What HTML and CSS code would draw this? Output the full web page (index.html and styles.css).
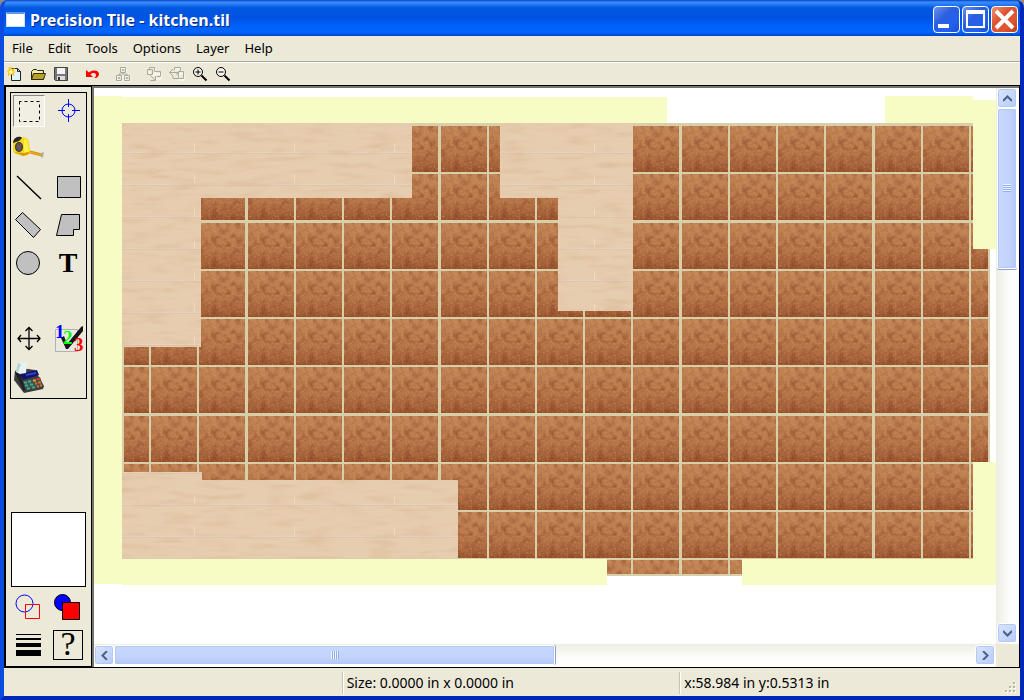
FILE: index.html
```
<!DOCTYPE html>
<html lang="en">
<head>
    <meta charset="utf-8">
    <title>Precision Tile - kitchen.til</title>
    <link rel="stylesheet" href="styles.css">
</head>
<body>
<div class="window">
    <header class="titlebar">
        <span class="app-icon"></span>
        <h1>Precision Tile - kitchen.til</h1>
        <div class="window-buttons">
            <button type="button" aria-label="Minimize"><svg width="25" height="25"><path d="M4 17h11v4H4z" fill="#fff"/></svg></button>
            <button type="button" aria-label="Maximize"><svg width="25" height="25"><path d="M3 3h19v18H3zM5 7v12h15V7z" fill="#fff" fill-rule="evenodd"/></svg></button>
            <button type="button" class="close" aria-label="Close"><svg width="25" height="25"><path d="M4 4L21 21M21 4L4 21" stroke="#fff" stroke-width="4"/></svg></button>
        </div>
    </header>

    <nav class="menu">
        <button type="button">File</button>
        <button type="button">Edit</button>
        <button type="button">Tools</button>
        <button type="button">Options</button>
        <button type="button">Layer</button>
        <button type="button">Help</button>
    </nav>

    <div class="toolbar">
        <button type="button" aria-label="New">
            <svg width="16" height="16"><path d="M4.500 2.500h6l3 3v9h-9z" fill="#e3f3fa" stroke="#222"/><path d="M10.500 2.500v3h3" fill="none" stroke="#222"/><path d="M4 0l1 3 3-1-1 3 2 1-2 1v3L4 8 1 10V7L0 5l2-1-1-3 2 1z" fill="#f8c61b"/><path d="M4 3l1 2 2 1-2 1-1 2-1-2-2-1 2-1z" fill="#fff8a0"/></svg>
        </button>
        <button type="button" aria-label="Open">
            <svg width="16" height="16"><path d="M1.500 13.500v-8l2-2h3l1 1h6v9z" fill="#f2e47c" stroke="#222"/><path d="M3 6h9" stroke="#fffbd0"/><path d="M1.500 13.500l2-6h12l-2 6z" fill="#b5a12e" stroke="#332c08"/></svg>
        </button>
        <button type="button" aria-label="Save">
            <svg width="16" height="16"><path d="M1.500 1.500h13v13h-12l-1-1z" fill="#777" stroke="#444"/><path d="M4 2h8v6H4z" fill="#f4f4f4"/><path d="M4 10h8v4H4z" fill="#ddd"/><path d="M5 11h2v3H5z" fill="#333"/></svg>
        </button>
        <button type="button" class="apart" aria-label="Undo">
            <svg width="16" height="16"><path d="M2 4v7h7L6.500 8.500C9 6 12 7 12 9c0 1.500-1 2.500-2 3h2c2-1 3-2.500 3-4.500C14.500 4.500 9 3 5 6.500z" fill="#f00"/></svg>
        </button>
        <button type="button" class="apart" aria-label="Group" disabled>
            <svg width="16" height="16"><path d="M6 3h5v5H6zM3 10h5v5H3zM10 10h5v5h-5z" fill="none" stroke="#fff"/><path d="M5.500 1.500h5v5h-5zM1.500 9.500h5v5h-5zM9.500 9.500h5v5h-5zM8 6v2M4 9V8h8v1M7 5l1-2 1 2M3 13l1-2 1 2M11 13l1-2 1 2" fill="none" stroke="#aca899"/></svg>
        </button>
        <button type="button" class="apart" aria-label="Bring to front" disabled>
            <svg width="16" height="16"><path d="M3 3h6v6H3zM10 8h5v5h-5z" fill="none" stroke="#fff"/><path d="M3.500 4.500v-3h5v4M1.500 3.500h5v5h-5zM8.500 5.500h6v5h-4M4 9l5 5M9.500 10v4.500h-5" fill="none" stroke="#aca899"/></svg>
        </button>
        <button type="button" aria-label="Send to back" disabled>
            <svg width="16" height="16"><path d="M6 3h6v5M10 8h5v6h-5z" fill="none" stroke="#fff"/><path d="M5.500 4.500v-3h6v4M9.500 5.500h5v7h-5zM9 8H7M4 3L.500 6.500 4 10M1 6.500h8M4 10v2.500h5" fill="none" stroke="#aca899"/></svg>
        </button>
        <button type="button" aria-label="Zoom in">
            <svg width="16" height="16"><circle cx="6" cy="6" r="4.500" fill="#f5f3ea" stroke="#000"/><path d="M3.500 6h5M6 3.500v5" stroke="#000"/><path d="M9.500 9.500l5 5" stroke="#000" stroke-width="2"/></svg>
        </button>
        <button type="button" aria-label="Zoom out">
            <svg width="16" height="16"><circle cx="6" cy="6" r="4.500" fill="#f5f3ea" stroke="#000"/><path d="M3.500 6h5" stroke="#000"/><path d="M9.500 9.500l5 5" stroke="#000" stroke-width="2"/></svg>
        </button>
    </div>

    <main class="workspace">
        <aside class="panel">
            <div class="tools boxed">
                <button type="button" class="selected" aria-label="Select">
                    <svg width="32" height="32"><rect x="5.500" y="5.500" width="20" height="20" fill="none" stroke="#000" stroke-dasharray="3 3" stroke-dashoffset="1"/></svg>
                </button>
                <button type="button" aria-label="Origin">
                    <svg width="32" height="32"><path d="M6 15.500h7M20 15.500h8M16.500 4v8M16.500 19v8" stroke="#00f"/><circle cx="16.500" cy="15.500" r="6.500" fill="none" stroke="#00f"/></svg>
                </button>
                <button type="button" aria-label="Measure">
                    <svg width="32" height="32">
                        <path d="M13 17l16 4v2l-16-4z" fill="#f9b51b" stroke="#d98c08" stroke-width="1"/>
                        <path d="M28 20l3-1-1 5-2 1z" fill="#aaa"/>
                        <path d="M0 9C1 5 4 3 8 4l5 1c2 1 3 3 3 6l1 7c0 3-3 5-6 5l-8-2-3-3z" fill="#f8d711"/>
                        <path d="M0 9C1 5 4 3 8 4l1 1-3 3-6 2z" fill="#26262a"/>
                        <path d="M11 6l3 1 2 11-5 5z" fill="#fff047"/>
                        <path d="M1 19l9 4 6-2v-2l-6 1z" fill="#d89b08"/>
                        <ellipse cx="6" cy="14" rx="4" ry="5" fill="#2c3038"/>
                        <ellipse cx="6" cy="14" rx="3" ry="4" fill="#5f555a"/>
                        <path d="M5 12h2v3H5z" fill="#83504a"/>
                    </svg>
                </button>
                <span></span>
                <button type="button" aria-label="Line">
                    <svg width="32" height="32"><path d="M4 5l24 23" stroke="#000" stroke-width="1.500"/></svg>
                </button>
                <button type="button" aria-label="Rectangle">
                    <svg width="32" height="32"><path d="M5.500 5.500h23v21h-23z" fill="#c0c0c0" stroke="#000"/></svg>
                </button>
                <button type="button" aria-label="Rotated rectangle">
                    <svg width="32" height="32"><path d="M9.500 3.500l18 17-7 8-18-18z" fill="#c0c0c0" stroke="#000"/></svg>
                </button>
                <button type="button" aria-label="Polygon">
                    <svg width="32" height="32"><path d="M9.500 5.500h18v15h-6v6h-17z" fill="#c0c0c0" stroke="#000"/></svg>
                </button>
                <button type="button" aria-label="Ellipse">
                    <svg width="32" height="32"><circle cx="15" cy="16" r="11.500" fill="#c0c0c0" stroke="#000"/></svg>
                </button>
                <button type="button" class="text-tool">T</button>
                <span></span>
                <span></span>
                <button type="button" aria-label="Move">
                    <svg width="32" height="32"><path d="M5 15.500h22M16 4.500v22M8 12l-3 3.500L8 19M24 12l3 3.500-3 3.500M12.500 8L16 4.500 19.500 8M12.500 23l3.500 3.500 3.500-3.500" fill="none" stroke="#000" stroke-width="1.300"/></svg>
                </button>
                <button type="button" aria-label="Count">
                    <svg class="count" width="32" height="32">
                        <path d="M3.500 6.500h22v22h-22z" fill="#ebe8e0" stroke="#b0b0b8"/>
                        <path d="M9 15l3-2 3 8L29 4l2-1v5L16 26h-2z" fill="#161616"/>
                        <text class="digit" x="3" y="15" fill="#00f">1</text>
                        <text class="digit" x="11" y="21" fill="#0f0">2</text>
                        <text class="digit" x="22" y="28" fill="#f00">3</text>
                    </svg>
                </button>
                <button type="button" aria-label="Estimate">
                    <svg width="32" height="32">
                        <path d="M2 10l6-3 14 2 4 7 5 9-1 3-19 4L1 19z" fill="#3b3b40"/>
                        <path d="M2 11l9 20 1-3-5-15z" fill="#222"/>
                        <path d="M7 13l17-4 2 5-16 5z" fill="#10156b"/>
                        <path d="M13 14l10-2" stroke="#3040c8" stroke-width="2"/>
                        <path d="M3 11l2-10 4 1 5-1-1 11-6 1z" fill="#e8f2f2"/>
                        <path d="M5 2l-2 8 2 1 3-8z" fill="#b9cfd0"/>
                        <path d="M10 20l17-4 3 9-17 4z" fill="#4d4d50"/>
                        <path d="M11 21.500h3M15 20.500h3M12 24.500h3M17 23.500h3M14 27.500h3M19 26.500h3" stroke="#25b98a" stroke-width="2"/>
                        <path d="M20 19.500h3" stroke="#e8a020" stroke-width="2"/>
                        <path d="M24 18h3" stroke="#f03020" stroke-width="2"/>
                        <path d="M22 22.500h2M25 21.500h3M24 25.500h2M27 24.500h2" stroke="#dc7818" stroke-width="2"/>
                    </svg>
                </button>
                <span></span>
            </div>

            <div class="panel-foot">
                <div class="preview boxed"></div>
                <div class="tools">
                    <button type="button" aria-label="Line colour">
                        <svg width="32" height="32"><circle cx="11.500" cy="12.500" r="8.500" fill="none" stroke="#00f"/><path d="M12.500 13.500h14v14h-14z" fill="none" stroke="#f00"/></svg>
                    </button>
                    <button type="button" aria-label="Fill colour">
                        <svg width="32" height="32"><circle cx="10.500" cy="11.500" r="8" fill="#00f" stroke="#000"/><path d="M10.500 11.500h17v17h-17z" fill="#f00" stroke="#000"/></svg>
                    </button>
                    <button type="button" aria-label="Line width">
                        <svg width="32" height="32"><path d="M3 5h25v1H3zM3 9h25v2H3zM3 14h25v4H3zM3 21h25v6H3z"/></svg>
                    </button>
                    <button type="button" class="help-tool">?</button>
                </div>
            </div>
        </aside>

        <section class="canvas">
            <svg class="drawing" aria-label="Kitchen floor plan">
                <defs>
                    <linearGradient id="clay" x1="0" y1="0" x2="0" y2="1">
                        <stop offset="0" stop-color="#c18657"/>
                        <stop offset=".5" stop-color="#b9784a"/>
                        <stop offset=".85" stop-color="#a5623a"/>
                        <stop offset="1" stop-color="#965029"/>
                    </linearGradient>
                    <filter id="grit" x="0" y="0" width="1" height="1" color-interpolation-filters="sRGB">
                        <feTurbulence type="fractalNoise" baseFrequency=".5" numOctaves="2" seed="8"/>
                        <feColorMatrix values="0 0 0 0 .85  0 0 0 0 .6  0 0 0 0 .4  1.200 0 0 0 -.52" result="light"/>
                        <feTurbulence type="fractalNoise" baseFrequency=".16" numOctaves="4" seed="21"/>
                        <feColorMatrix values="0 0 0 0 .5  0 0 0 0 .22  0 0 0 0 .13  1.200 0 0 0 -.52" result="dark"/>
                        <feMerge>
                            <feMergeNode in="SourceGraphic"/>
                            <feMergeNode in="light"/>
                            <feMergeNode in="dark"/>
                        </feMerge>
                    </filter>
                    <filter id="grain" x="0" y="0" width="1" height="1" color-interpolation-filters="sRGB">
                        <feTurbulence type="fractalNoise" baseFrequency=".03 .16" numOctaves="2" seed="4"/>
                        <feColorMatrix values="0 0 0 0 .8  0 0 0 0 .66  0 0 0 0 .5  .8 0 0 0 -.36" result="veins"/>
                        <feMerge><feMergeNode in="SourceGraphic"/><feMergeNode in="veins"/></feMerge>
                        <feComposite in2="SourceGraphic" operator="in"/>
                    </filter>
                    <pattern id="planks" x="94" y="121" width="100" height="32" patternUnits="userSpaceOnUse">
                        <path d="M0 0h100v32H0z" fill="#e7cdb0"/>
                        <path d="M0 31h100v1H0z" fill="#e6d2bf"/>
                        <path d="M0 0h100v1H0z" fill="#dfc5a8"/>
                        <path d="M0 22h1v9H0z" fill="#f0dcc5"/>
                    </pattern>
                    <rect id="tile" width="46" height="46" fill="url(#clay)" filter="url(#grit)"/>
                    <g id="row">
                        <use href="#tile" x="103"/><use href="#tile" x="151"/><use href="#tile" x="199"/>
                        <use href="#tile" x="248"/><use href="#tile" x="296"/><use href="#tile" x="344"/>
                        <use href="#tile" x="392"/><use href="#tile" x="441"/><use href="#tile" x="489"/>
                        <use href="#tile" x="537"/><use href="#tile" x="585"/><use href="#tile" x="633"/>
                        <use href="#tile" x="682"/><use href="#tile" x="730"/><use href="#tile" x="778"/>
                        <use href="#tile" x="826"/><use href="#tile" x="875"/><use href="#tile" x="923"/>
                        <use href="#tile" x="971"/>
                    </g>
                    <clipPath id="floor">
                        <path d="M124 126H973V249H988V462H973V558H742V574H607V558H124z"/>
                    </clipPath>
                </defs>
                <g transform="translate(-94 -88)">
                    <!-- walls -->
                    <path fill="#f7fcc5" d="M94 96h28v1h545v26H122v436h485v26H122v-1H94zM885 96h88v4h23v149h-23V123h-88zM973 462h23v123H742v-26h231z"/>
                    <!-- grout -->
                    <path fill="#d8cfa9" d="M122 123H973V249H990V462H973V559H742V576H607V559H122z"/>
                    <!-- tiles -->
                    <g clip-path="url(#floor)">
                        <use href="#row" y="126"/><use href="#row" y="174"/><use href="#row" y="223"/>
                        <use href="#row" y="271"/><use href="#row" y="319"/><use href="#row" y="367"/>
                        <use href="#row" y="416"/><use href="#row" y="464"/><use href="#row" y="512"/>
                        <use href="#row" y="560"/>
                    </g>
                    <!-- cabinets -->
                    <path fill="url(#planks)" filter="url(#grain)" d="M122 123H412V198H201V347H122zM500 123H633V311H558V198H500zM122 472H202V480H458V558H122z"/>
                </g>
            </svg>
            <div class="scroll vertical">
                <button type="button" aria-label="Scroll up"><svg width="9" height="7"><path d="M0 6l4.500-4.500L9 6" fill="none" stroke="#4d6185" stroke-width="2"/></svg></button>
                <span class="thumb"><i></i></span>
                <button type="button" class="last" aria-label="Scroll down"><svg width="9" height="7"><path d="M0 1l4.500 4.500L9 1" fill="none" stroke="#4d6185" stroke-width="2"/></svg></button>
            </div>
            <div class="scroll horizontal">
                <button type="button" aria-label="Scroll left"><svg width="7" height="9"><path d="M6 0L1.500 4.500 6 9" fill="none" stroke="#4d6185" stroke-width="2"/></svg></button>
                <span class="thumb"><i></i></span>
                <button type="button" class="last" aria-label="Scroll right"><svg width="7" height="9"><path d="M1 0l4.500 4.500L1 9" fill="none" stroke="#4d6185" stroke-width="2"/></svg></button>
            </div>
        </section>
    </main>

    <footer class="status">
        <div></div>
        <div>Size: 0.0000 in x 0.0000 in</div>
        <div>
            x:58.984 in y:0.5313 in
            <svg class="grip" width="12" height="12"><path d="M9 1h2v2H9zM5 5h2v2H5zM9 5h2v2H9zM1 9h2v2H1zM5 9h2v2H5zM9 9h2v2H9z" fill="#fff"/><path d="M8 0h2v2H8zM4 4h2v2H4zM8 4h2v2H8zM0 8h2v2H0zM4 8h2v2H4zM8 8h2v2H8z" fill="#b8b4a2"/></svg>
        </div>
    </footer>
</div>
</body>
</html>
```
FILE: styles.css
```
:root {
    --face: #ece9d8;
    --blue: #0046e0;
    --shadow: #aca899;
}

* {
    box-sizing: border-box;
}

body {
    margin: 0;
    background: #8d8d85;
    font-family: "Noto Sans", "DejaVu Sans", sans-serif;
    font-size: 14px;
    color: #000;
}

button {
    margin: 0;
    padding: 0;
    border: none;
    background: none;
    font: inherit;
    color: inherit;
}

svg {
    display: block;
}

.window {
    display: flex;
    flex-direction: column;
    height: 100vh;
    border: 4px solid var(--blue);
    border-top: none;
    border-left-color: #0a4be0;
    border-right-color: #0028b8;
    border-bottom-color: #0028b8;
    border-radius: 8px 8px 0 0;
    background: var(--blue);
    overflow: hidden;
}

/* title bar */
.titlebar {
    display: flex;
    align-items: center;
    height: 36px;
    flex: none;
    margin: 0 -4px;
    padding: 3px 6px 0;
    background: linear-gradient(#0840c8 0, #3a8cf8 2px, #2a80f5 4px, #0058e0 8px, #0053e1 18px, #0060fa 26px, #0066ff 32px, #0045c8 36px);
}

.titlebar h1 {
    flex: 1;
    margin: 0;
    padding-left: 5px;
    font-size: 16px;
    font-weight: bold;
    line-height: 20px;
    color: #fff;
    text-shadow: 1px 1px 0 #0a2a80;
}

.app-icon {
    width: 19px;
    height: 15px;
    border: 1px solid #cfe0f8;
    border-top: 2px solid #5c95ec;
    background: #fff;
}

.window-buttons {
    display: flex;
    gap: 2px;
}

.window-buttons button {
    width: 27px;
    height: 27px;
    border: 1px solid #fff;
    border-radius: 4px;
    background: linear-gradient(135deg, #6c93f0, #2b5ee0 40%, #2461ee 70%, #1a50d0);
}

.window-buttons .close {
    background: linear-gradient(135deg, #f0906c, #dc5230 40%, #e0562f 70%, #b83a18);
}

/* menu */
.menu {
    display: flex;
    gap: 1px;
    height: 27px;
    flex: none;
    padding-left: 1px;
    background: var(--face);
    border-bottom: 1px solid #fff;
    box-shadow: inset 0 -1px var(--shadow);
    font-size: 13px;
}

.menu button {
    padding: 0 7px 2px;
}

.toolbar {
    display: flex;
    height: 22px;
    flex: none;
    background: var(--face);
}

.toolbar button {
    display: flex;
    align-items: center;
    justify-content: center;
    width: 23px;
    padding-right: 1px;
}

.toolbar .apart {
    margin-left: 8px;
}

/* tool panel */
.workspace {
    display: flex;
    flex: 1;
    min-height: 0;
    border: 1px solid #000;
    background: var(--face);
}

.panel {
    display: flex;
    flex-direction: column;
    justify-content: space-between;
    width: 87px;
    flex: none;
    padding: 5px 4px;
    border: 1px solid #000;
}

.boxed {
    border: 1px solid #000;
}

.tools {
    display: grid;
    grid-template-columns: 32px 32px;
    grid-auto-rows: 32px;
    gap: 6px 7px;
    padding: 2px;
}

.tools.boxed {
    padding-bottom: 5px;
}

.tools .selected {
    border: 1px solid #8a8880;
    border-right-color: #fff;
    border-bottom-color: #fff;
    background: #f1efe4;
}

.text-tool {
    font-family: "Liberation Serif", serif;
    font-size: 28px;
    font-weight: bold;
    line-height: 32px;
}

.count {
    overflow: visible;
}

.digit {
    font-family: "Liberation Serif", serif;
    font-size: 19px;
    font-weight: bold;
}

.help-tool {
    margin: 1px;
    border: 1px solid #000;
    font-family: "Liberation Serif", serif;
    font-size: 34px;
    line-height: 26px;
    padding-bottom: 2px;
}

.preview {
    width: 75px;
    height: 75px;
    margin-left: 1px;
    background: #fff;
}

.panel-foot .tools {
    padding: 4px 3px 0;
}

/* canvas */
.canvas {
    display: grid;
    grid-template-columns: 1fr 23px;
    grid-template-rows: 1fr 23px;
    flex: 1;
    min-width: 0;
    border: 2px solid #77756a;
    border-right: none;
    border-bottom: none;
}

.drawing {
    width: 100%;
    height: 100%;
    background: #fff;
}

.scroll {
    display: flex;
}

.vertical {
    flex-direction: column;
    padding: 0 2px 1px 1px;
    background: linear-gradient(to right, #eeede5, #fdfdfa 60%, #fff);
}

.horizontal {
    padding: 1px 1px 2px 0;
    background: linear-gradient(#eeede5, #fdfdfa 60%, #fff);
}

.scroll button {
    display: flex;
    align-items: center;
    justify-content: center;
    width: 20px;
    height: 20px;
    flex: none;
    border: 1px solid #fff;
    border-radius: 3px;
    background: linear-gradient(135deg, #dbe5ff, #b6cbf8);
    box-shadow: inset 0 0 0 1px #b4c8f6;
}

.scroll .last {
    margin-top: auto;
}

.horizontal .last {
    margin: 0 0 0 auto;
}

.thumb {
    display: flex;
    align-items: center;
    justify-content: center;
    border: 1px solid #fff;
    border-radius: 2px;
    background: linear-gradient(to right, #c9d8fc, #c2d3fd 60%, #b4c9f6);
    box-shadow: 0 1px #86a3d4, inset 0 0 0 1px #b4c8f6;
}

.vertical .thumb {
    height: 29%;
}

.horizontal .thumb {
    width: 49%;
    background: linear-gradient(#c9d8fc, #c2d3fd 60%, #b4c9f6);
    box-shadow: 1px 0 #86a3d4, inset 0 0 0 1px #b4c8f6;
}

.thumb i {
    width: 8px;
    height: 8px;
    background: repeating-linear-gradient(#eef4fe 0 1px, #8cb0f8 1px 2px);
}

.horizontal .thumb i {
    background: repeating-linear-gradient(to right, #eef4fe 0 1px, #8cb0f8 1px 2px);
}

/* status bar */
.status {
    display: grid;
    grid-template-columns: repeat(3, 1fr);
    align-items: end;
    height: 28px;
    flex: none;
    padding: 0 3px 2px 0;
    background: var(--face);
}

.status div {
    display: flex;
    justify-content: space-between;
    height: 22px;
    padding-left: 4px;
    line-height: 22px;
    border-left: 1px solid #c8c4b0;
    box-shadow: inset 1px 0 #fff;
}

.status div:first-child {
    border: none;
    box-shadow: none;
}

.grip {
    align-self: end;
}
```
